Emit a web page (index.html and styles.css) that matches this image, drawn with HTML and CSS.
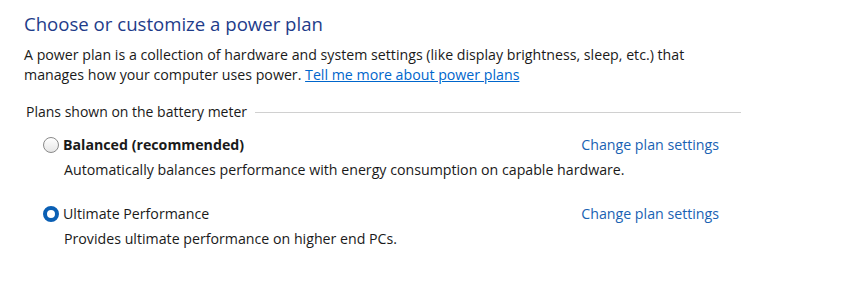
FILE: index.html
```html
<!DOCTYPE html>
<html lang="en">

<head>
  <meta charset="UTF-8">
  <meta name="viewport" content="width=device-width, initial-scale=1.0">
  <title>Power Options</title>
  <link rel="stylesheet" href="styles.css">
</head>

<body>
  <div id="container">
    <h1 class="title">Choose or customize a power plan</h1>
    <p class="intro">A power plan is a collection of hardware and system settings (like display brightness, sleep, etc.) that<br>
      manages how your computer uses power. <a href="#" class="link">Tell me more about power plans</a></p>

    <div class="group">
      <div class="group__head">
        <span class="group__label">Plans shown on the battery meter</span>
        <span class="group__line"></span>
      </div>

      <ul class="plans">
        <li class="plan">
          <div class="plan__row">
            <label class="plan__name plan__name--bold"><span class="radio"></span>Balanced (recommended)</label>
            <a href="#" class="plan__change">Change plan settings</a>
          </div>
          <div class="plan__desc">Automatically balances performance with energy consumption on capable hardware.</div>
        </li>
        <li class="plan">
          <div class="plan__row">
            <label class="plan__name"><span class="radio radio--on"></span>Ultimate Performance</label>
            <a href="#" class="plan__change">Change plan settings</a>
          </div>
          <div class="plan__desc">Provides ultimate performance on higher end PCs.</div>
        </li>
      </ul>
    </div>
  </div>
</body>

</html>
```

FILE: styles.css
```css
body {
  margin: 0;
  background: #fff;
  font-family: "Open Sans", "Noto Sans", sans-serif;
  color: #1a1a1a;
}

ul,
li {
  margin: 0;
  padding: 0;
  list-style: none;
}

#container {
  padding: 10px 0 0 24px;
  width: 717px;
}

#container .title {
  margin: 0;
  font-size: 18.6px;
  font-weight: 400;
  line-height: 28px;
  color: #1e3c8a;
}

#container .intro {
  margin: 7px 0 0;
  font-size: 14.2px;
  line-height: 20px;
  white-space: nowrap;
}

#container .link {
  color: #0066cc;
}

#container .group {
  margin-top: 17px;
}

#container .group__head {
  display: flex;
  align-items: center;
  padding-left: 2px;
  font-size: 14px;
  line-height: 20px;
}

#container .group__line {
  flex: 1;
  height: 1px;
  margin-left: 8px;
  background: #d0d0d0;
}

#container .plans {
  padding: 0 22px 0 19px;
  margin-top: 13px;
}

#container .plan {
  margin-bottom: 24px;
}

#container .plan__row {
  display: flex;
  align-items: center;
  justify-content: space-between;
  font-size: 14.2px;
  line-height: 20px;
}

#container .plan__name {
  display: flex;
  align-items: center;
}

#container .plan__name--bold {
  font-weight: 700;
}

#container .plan__change {
  color: #1a62b3;
  text-decoration: none;
}

#container .plan__desc {
  padding-left: 21px;
  margin-top: 5px;
  font-size: 14.2px;
  line-height: 20px;
}

.radio {
  box-sizing: border-box;
  width: 16px;
  height: 16px;
  margin-right: 4px;
  border-radius: 50%;
  border: 1px solid #8a8a8a;
  background: linear-gradient(#ffffff, #e6e6e6);
}

.radio--on {
  border: 4.5px solid #0a5fb4;
  background: #fff;
}
```
